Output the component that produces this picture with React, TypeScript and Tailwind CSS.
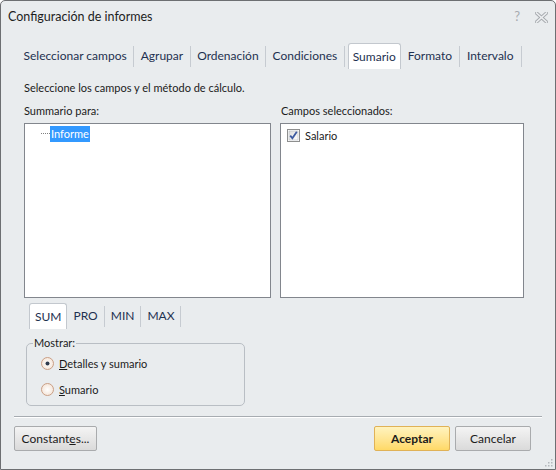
import React from "react";

const tabs = ["Seleccionar campos", "Agrupar", "Ordenación", "Condiciones"];
const tabsAfter = ["Formato", "Intervalo"];

const Sep = ({ h = "h-[21px]" }: { h?: string }) => (
  <div className={`w-px ${h} bg-[#c6cbd1]`} />
);

const CheckBox = () => (
  <svg width="13" height="13" viewBox="0 0 13 13">
    <defs>
      <linearGradient id="cb" x1="0" y1="0" x2="1" y2="1">
        <stop offset="0" stopColor="#dcdcdc" />
        <stop offset="1" stopColor="#ffffff" />
      </linearGradient>
    </defs>
    <rect x="0.5" y="0.5" width="12" height="12" fill="#fff" stroke="#8e8f8f" />
    <rect x="2" y="2" width="9" height="9" fill="url(#cb)" stroke="#b4b9be" strokeWidth="0.6" />
    <path d="M3.2 6.6 L5.4 9.2 L9.8 2.8" fill="none" stroke="#3d5aa0" strokeWidth="1.8" />
  </svg>
);

const Radio = ({ checked }: { checked?: boolean }) => (
  <svg width="13" height="13" viewBox="0 0 13 13">
    <defs>
      <radialGradient id={checked ? "r1" : "r2"} cx="0.5" cy="0.5" r="0.6">
        <stop offset="0" stopColor="#ffffff" />
        <stop offset="1" stopColor="#f3e1d2" />
      </radialGradient>
    </defs>
    <circle cx="6.5" cy="6.5" r="6" fill={`url(#${checked ? "r1" : "r2"})`} stroke="#c99f86" />
    {checked && <circle cx="6.5" cy="6.5" r="2" fill="#2f3b4e" />}
  </svg>
);

export default function App() {
  return (
    <div
      className="w-[556px] h-[470px] bg-[#e9ecee] border border-[#6d6f72] rounded-t-[5px] flex flex-col text-[12px] text-[#1b1b1b] relative overflow-hidden"
      style={{ fontFamily: "Lato, 'Noto Sans', sans-serif" }}
    >
      {/* title bar */}
      <div className="h-[33px] flex items-center pl-[7px] pr-[8px]">
        <span className="text-[12.5px] text-[#1e1e1e]">Configuración de informes</span>
        <div className="ml-auto flex items-center gap-[15px] text-[#a7abb0]">
          <span className="text-[13px] leading-none mt-[-2px]">?</span>
          <svg width="13" height="11" viewBox="0 0 13 11" className="mr-[-1px]">
            <path d="M1.5 1 L11.5 10 M11.5 1 L1.5 10" stroke="#a6aaae" strokeWidth="3.4" strokeLinecap="square" />
            <path d="M1.5 1 L11.5 10 M11.5 1 L1.5 10" stroke="#eceef0" strokeWidth="1.6" strokeLinecap="square" />
          </svg>
        </div>
      </div>

      {/* tab strip */}
      <div className="mt-[9px] h-[26px] flex items-center pl-[16px] text-[#1e3150]">
        {tabs.map((t) => (
          <React.Fragment key={t}>
            <div className="px-[6.5px] leading-[26px]">{t}</div>
            <Sep />
          </React.Fragment>
        ))}
        <div className="ml-[3px] h-[26px] bg-white border border-b-0 border-[#c3c8ce] rounded-t-[3px] px-[4px] leading-[25px]">
          Sumario
        </div>
        {tabsAfter.map((t) => (
          <React.Fragment key={t}>
            <div className="px-[7px] leading-[26px]">{t}</div>
            <Sep />
          </React.Fragment>
        ))}
      </div>

      {/* content */}
      <div className="pl-[23px] pr-[31px] mt-[11px] text-[11px]">
        <div className="leading-[15px]">Seleccione los campos y el método de cálculo.</div>
        <div className="flex gap-[9px] mt-[8px]">
          <div className="w-[247px]">
            <div className="leading-[15px]">Summario para:</div>
            <div className="mt-[5px] h-[175px] bg-white border border-[#82868d] pt-[1px] pl-[16px]">
              <div className="flex items-center h-[17px]">
                <div className="w-[9px] border-t border-dotted border-[#808080]" />
                <span className="bg-[#3399ff] text-white px-[1px] leading-[16px]">Informe</span>
              </div>
            </div>
          </div>
          <div className="w-[244px]">
            <div className="leading-[15px] pl-[1px]">Campos seleccionados:</div>
            <div className="mt-[5px] h-[175px] bg-white border border-[#82868d] pt-[4px] pl-[6px]">
              <div className="flex items-center gap-[5px]">
                <CheckBox />
                <span className="leading-[15px]">Salario</span>
              </div>
            </div>
          </div>
        </div>

        {/* calc tabs */}
        <div className="mt-[5px] h-[26px] flex items-center pl-[5px] text-[#1e3150] text-[12px]">
          <div className="h-[26px] bg-white border border-b-0 border-[#c3c8ce] rounded-t-[3px] px-[5px] leading-[25px]">
            SUM
          </div>
          {["PRO", "MIN", "MAX"].map((t) => (
            <React.Fragment key={t}>
              <div className="px-[6px] leading-[26px]">{t}</div>
              <Sep />
            </React.Fragment>
          ))}
        </div>

        {/* group box */}
        <div className="relative mt-[14px] ml-[2px] w-[219px] h-[63px] border border-[#b9bec4] rounded-[5px]">
          <span className="absolute left-[6px] top-[-9px] bg-[#e9ecee] px-[1px] leading-[15px]">Mostrar:</span>
          <div className="flex items-center gap-[5px] pl-[14px] mt-[12px]">
            <Radio checked />
            <span className="leading-[15px]">
              <u>D</u>etalles y sumario
            </span>
          </div>
          <div className="flex items-center gap-[5px] pl-[14px] mt-[11px]">
            <Radio />
            <span className="leading-[15px]">
              <u>S</u>umario
            </span>
          </div>
        </div>
      </div>

      {/* separator */}
      <div className="mt-[10px] mx-[13px] border-t border-[#a7acb1] border-b-white border-b" />

      {/* buttons */}
      <div className="flex items-center px-[13px] mt-[8px]">
        <button className="w-[83px] h-[25px] border border-[#a9abad] rounded-[2px] bg-gradient-to-b from-[#f4f4f4] to-[#dadada] text-[#1b1b1b]">
          Constant<u>e</u>s...
        </button>
        <button className="ml-auto w-[76px] h-[25px] border border-[#e0b257] rounded-[2px] bg-gradient-to-b from-[#fff3be] to-[#ffd966] font-bold text-[#1b1b1b]">
          Aceptar
        </button>
        <button className="ml-[5px] w-[76px] h-[25px] border border-[#a9abad] rounded-[2px] bg-gradient-to-b from-[#f4f4f4] to-[#dadada] text-[#1b1b1b]">
          Cancelar
        </button>
        <div className="w-[11px]" />
      </div>

      {/* size grip */}
      <svg className="absolute right-[2px] bottom-[2px]" width="10" height="10" viewBox="0 0 10 10">
        {[
          [8, 2],
          [5, 5],
          [8, 5],
          [2, 8],
          [5, 8],
          [8, 8],
        ].map(([x, y]) => (
          <rect key={`${x}-${y}`} x={x} y={y} width="1.5" height="1.5" fill="#b4b8bc" />
        ))}
      </svg>
    </div>
  );
}
